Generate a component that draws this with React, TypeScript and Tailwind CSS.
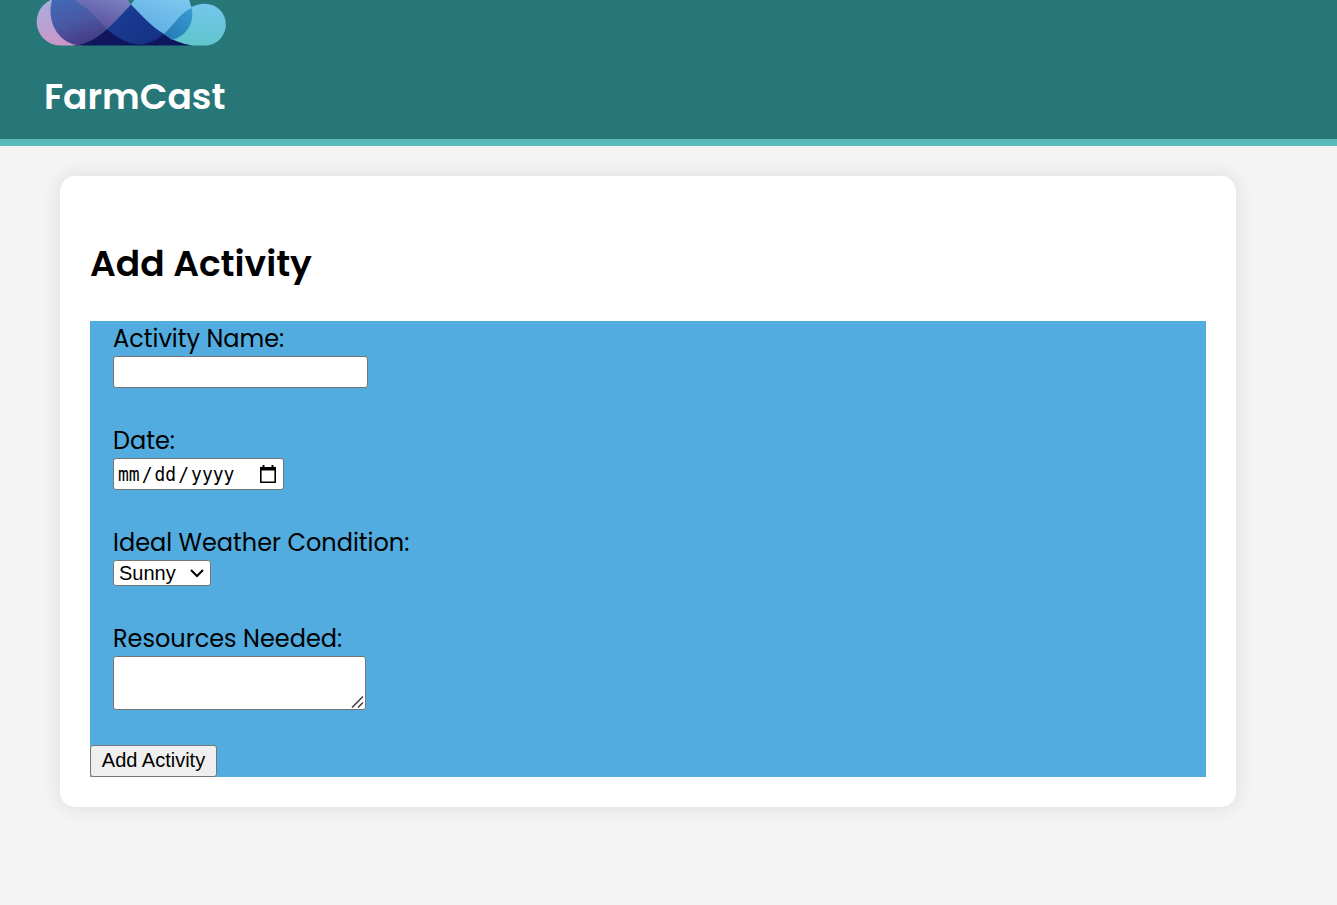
import React from "react";

function CloudLogo() {
  return (
    <svg className="block" width="190" height="46" viewBox="36 0 190 46" aria-hidden="true">
      <defs>
        <linearGradient id="pink" x1="0" y1="0" x2="0.4" y2="1">
          <stop offset="0" stopColor="#a2b0df" />
          <stop offset="1" stopColor="#cb96c8" />
        </linearGradient>
        <linearGradient id="violet" x1="0.2" y1="0" x2="0.6" y2="1">
          <stop offset="0" stopColor="#4268b5" />
          <stop offset="0.5" stopColor="#4a58a5" />
          <stop offset="1" stopColor="#463a80" />
        </linearGradient>
        <linearGradient id="lilac" x1="1" y1="0" x2="0.4" y2="1">
          <stop offset="0" stopColor="#7a86c4" />
          <stop offset="0.5" stopColor="#6b69b0" />
          <stop offset="1" stopColor="#5a5099" />
        </linearGradient>
        <linearGradient id="sky" x1="1" y1="0" x2="0.4" y2="1">
          <stop offset="0" stopColor="#7ccaf0" />
          <stop offset="1" stopColor="#61ade2" />
        </linearGradient>
        <linearGradient id="aqua" x1="0.6" y1="0" x2="0.4" y2="1">
          <stop offset="0" stopColor="#74c6ec" />
          <stop offset="1" stopColor="#5fc5ca" />
        </linearGradient>
        <linearGradient id="overlap" x1="1" y1="0" x2="0" y2="1">
          <stop offset="0" stopColor="#3a9bd2" />
          <stop offset="1" stopColor="#2478b4" />
        </linearGradient>
        <linearGradient id="royal" x1="0" y1="0" x2="1" y2="1">
          <stop offset="0" stopColor="#1b3f96" />
          <stop offset="1" stopColor="#133083" />
        </linearGradient>
      </defs>
      <path d="M60 -2 A23.3 23.7 0 0 0 60 45.5 H82 V-2Z" fill="url(#pink)" />
      <path d="M205 3.7 A20.9 20.9 0 0 1 205 45.5 H190 C180 44 172 40 164 34 C177 22 184 4 205 3.7Z" fill="url(#aqua)" />
      <path d="M72 45.5 C88 44 98 37 107 29 L131 4.5 L164 34 C172 40 182 44 193 45.5Z" fill="#10165d" />
      <path d="M131 4.5 C124 12 115 22 107 29 C117 38 127 44 141 44.7 C150 43 158 39 164 34 C151 25 142 16 131 4.5Z" fill="url(#royal)" />
      <path d="M52 0 C46 22 59 43 78 45 C89 43 98 37 107 29 C97 19 88 8 74 -1Z" fill="url(#violet)" />
      <path d="M73 -1 C88 7 97 19 107 29 C115 22 124 12 131 4.5 L127 -1Z" fill="url(#lilac)" />
      <path d="M135 -1 L131 4.5 C142 16 151 26 164 34 C174 25 180 13 191.5 8 L189 -1Z" fill="url(#sky)" />
      <path d="M191.5 8 C195 22 187 36 172 40 L164 34 C174 25 180 13 191.5 8Z" fill="url(#overlap)" />
    </svg>
  );
}

function Label({ htmlFor, children }: { htmlFor: string; children: React.ReactNode }) {
  return (
    <label htmlFor={htmlFor} className="-mb-px block w-fit text-2xl leading-9 whitespace-nowrap">
      {children}
    </label>
  );
}

export default function App() {
  return (
    <div className="flex min-h-[905px] flex-col bg-[#f4f4f4] font-['Poppins','Inter',sans-serif] text-black">
      <header className="flex h-[146px] flex-col border-b-[7px] border-[#5ab9ba] bg-[#287778] pl-9">
        <CloudLogo />
        <h1 className="mt-[27px] w-fit pl-2 text-4xl leading-[48px] font-semibold whitespace-nowrap text-white">
          FarmCast
        </h1>
      </header>

      <main className="mt-[30px] ml-[60px] h-[631px] w-[1176px] rounded-[15px] bg-white px-[30px] pt-[63px] shadow-[0_0_20px_rgba(0,0,0,0.1)]">
        <h2 className="w-fit text-4xl leading-[50px] font-semibold whitespace-nowrap">Add Activity</h2>

        <form className="mt-8 flex h-[456px] flex-col items-start bg-[#52acdf]" onSubmit={(e) => e.preventDefault()}>
          <div className="h-[102px] pl-[23px]">
            <Label htmlFor="name">Activity Name:</Label>
            <input id="name" className="block h-8 w-[255px] rounded-[3px] border border-[#767676] bg-white px-1 font-['Liberation_Sans',sans-serif] text-xl outline-none" />
          </div>

          <div className="h-[102px] pl-[23px]">
            <Label htmlFor="date">Date:</Label>
            <div id="date" className="flex h-8 w-[171px] items-center justify-between rounded-[3px] border border-[#767676] bg-white pr-[7px] pl-1 font-['DejaVu_Sans_Mono',monospace] text-[18px] leading-none">
              <div className="flex scale-y-110 gap-[2px] whitespace-nowrap">
                <span>mm</span>
                <span>/</span>
                <span>dd</span>
                <span>/</span>
                <span>yyyy</span>
              </div>
              <svg width="16" height="19" viewBox="0 0 16 19" fill="none" aria-hidden="true">
                <path d="M.8 3h14.4v14.2H.8z" stroke="black" strokeWidth="1.6" strokeLinejoin="round" />
                <path d="M0 2h16v3.5H0zM2.5 0h2v3h-2zM11.5 0h2v3h-2z" fill="black" />
              </svg>
            </div>
          </div>

          <div className="h-24 pl-[23px]">
            <Label htmlFor="weather">Ideal Weather Condition:</Label>
            <button id="weather" type="button" className="flex h-[26px] w-[98px] items-center justify-between rounded-[3px] border border-[#767676] bg-white pr-[6px] pl-[5px] font-['Liberation_Sans',sans-serif] text-xl leading-none">
              <span>Sunny</span>
              <svg width="14" height="10" viewBox="0 0 14 10" fill="none" aria-hidden="true">
                <path d="M1 2 7 8 13 2" stroke="black" strokeWidth="2" />
              </svg>
            </button>
          </div>

          <div className="h-[124px] pl-[23px]">
            <Label htmlFor="resources">Resources Needed:</Label>
            <div className="relative h-[54px] w-[253px]">
              <textarea id="resources" className="block h-full w-full resize-none rounded-[3px] border border-[#767676] bg-white p-1 font-['Liberation_Mono',monospace] outline-none" />
              <svg className="pointer-events-none absolute right-0.5 bottom-0.5" width="13" height="12" viewBox="0 0 13 12" aria-hidden="true">
                <path d="M1 11.5 12 .5M7 11.5l5-5" stroke="#444" strokeWidth="1.6" />
              </svg>
            </div>
          </div>

          <button type="submit" className="h-8 w-[127px] rounded-[3px] border border-[#767676] bg-[#efefef] pb-0.5 font-['Liberation_Sans',sans-serif] text-xl leading-none whitespace-nowrap">
            Add Activity
          </button>
        </form>
      </main>
    </div>
  );
}
